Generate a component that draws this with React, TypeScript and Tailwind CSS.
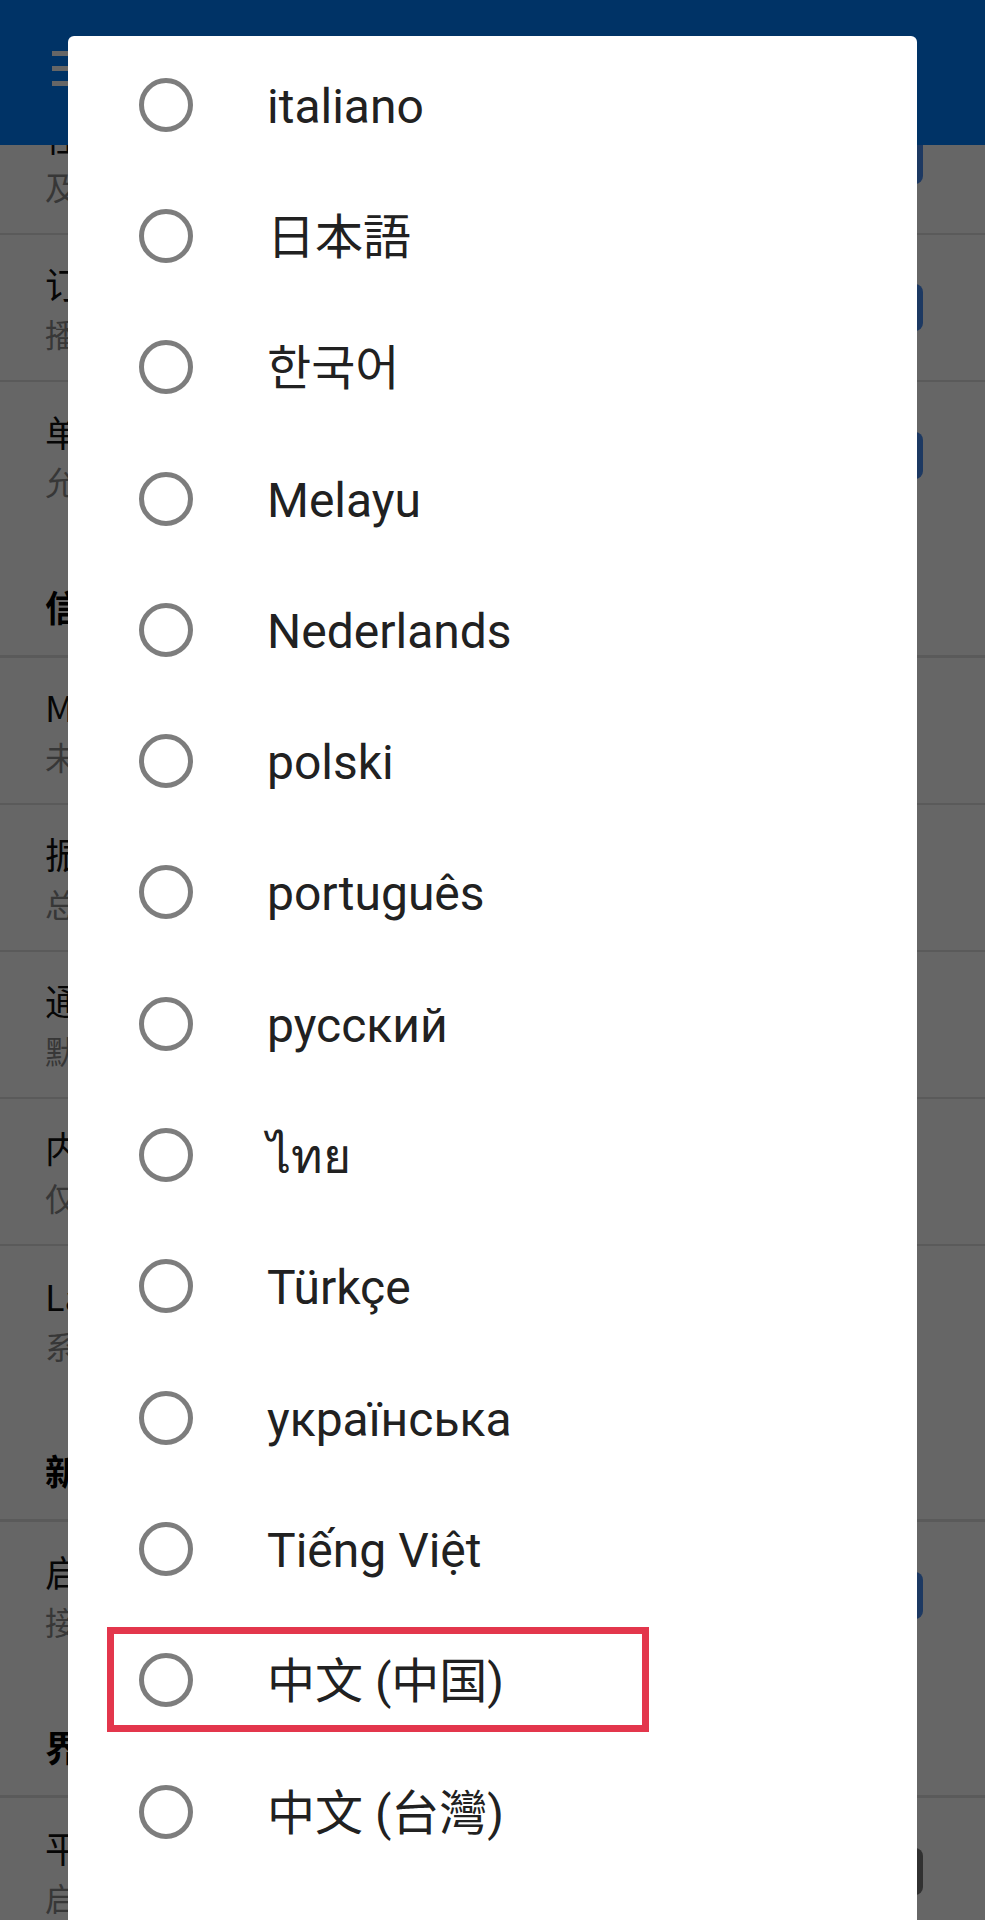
import React from 'react';

type Pref = { title: string; summary: string; toggle?: 'on' | 'off' };
type Block = { section?: string; items: Pref[] };

const blocks: Block[] = [
    {
        items: [
            { title: '任务完成后自动清理', summary: '及时删除已播放的内容', toggle: 'on' },
            { title: '订阅自动刷新', summary: '播放列表结束后自动刷新', toggle: 'on' },
            { title: '单曲循环', summary: '允许重复播放当前曲目', toggle: 'on' },
        ],
    },
    {
        section: '信息',
        items: [
            { title: 'Media 缓存', summary: '未设置' },
            { title: '振动反馈', summary: '总是' },
            { title: '通知样式', summary: '默认' },
            { title: '内容过滤', summary: '仅限 Wi-Fi' },
            { title: 'Language', summary: '系统默认' },
        ],
    },
    {
        section: '新闻',
        items: [{ title: '启用新闻推送', summary: '接收每日更新', toggle: 'on' }],
    },
    {
        section: '界面',
        items: [{ title: '平板模式', summary: '启用双栏布局', toggle: 'off' }],
    },
];

const languages = [
    { label: 'italiano' },
    { label: '日本語', font: "font-['Roboto','Noto_Sans_CJK_JP',sans-serif]" },
    { label: '한국어', font: "font-['Roboto','Noto_Sans_CJK_KR',sans-serif]" },
    { label: 'Melayu' },
    { label: 'Nederlands' },
    { label: 'polski' },
    { label: 'português' },
    { label: 'русский' },
    { label: 'ไทย' },
    { label: 'Türkçe' },
    { label: 'українська' },
    { label: 'Tiếng Việt' },
    { label: '中文 (中国)', font: "font-['Roboto','Noto_Sans_CJK_SC',sans-serif]", marked: true },
    { label: '中文 (台灣)', font: "font-['Roboto','Noto_Sans_CJK_TC',sans-serif]" },
];

function PrefRow({ pref, divider }: { pref: Pref; divider: boolean }) {
    return (
        <div className={`flex items-center justify-between h-[147px] pl-[45px] pr-[62px] ${divider ? 'border-b-2 border-[#e2e2e2]' : ''}`}>
            <div className="flex flex-col">
                <span className="text-[36px] leading-[50px] text-[#111] whitespace-nowrap">{pref.title}</span>
                <span className="text-[32px] leading-[50px] text-[#8a8a8a] whitespace-nowrap">{pref.summary}</span>
            </div>
            {pref.toggle && (
                <span className={`w-[120px] h-[47px] rounded-[8px] ${pref.toggle === 'on' ? 'bg-[#4a8ff5]' : 'bg-[#7a7a7a]'}`} />
            )}
        </div>
    );
}

export default function App() {
    return (
        <div className="relative w-[985px] h-[1920px] overflow-hidden bg-white font-['Noto_Sans_CJK_SC',sans-serif]">
            {/* Settings page */}
            <div className="flex flex-col h-full">
                <header className="relative z-10 flex items-start gap-[40px] h-[145px] min-h-[145px] bg-[#0080ff] pl-[52px] pt-[51px]">
                    <div className="flex flex-col gap-[10px] w-[54px]">
                        <span className="h-[5px] bg-white" />
                        <span className="h-[5px] bg-white" />
                        <span className="h-[5px] bg-white" />
                    </div>
                    <span className="text-[40px] leading-[36px] text-white">设置</span>
                </header>
                <div className="flex-1 overflow-hidden">
                    <div className="-mt-[57px]">
                        {blocks.map((block, bi) => (
                            <div key={bi}>
                                {block.section && (
                                    <div className="flex items-end h-[129px] pl-[45px] pb-[22px] border-b-[3px] border-[#e2e2e2]">
                                        <span className="text-[36px] font-bold text-[#000]">{block.section}</span>
                                    </div>
                                )}
                                {block.items.map((p, i) => (
                                    <PrefRow key={i} pref={p} divider={i < block.items.length - 1} />
                                ))}
                            </div>
                        ))}
                    </div>
                </div>
            </div>

            {/* Scrim */}
            <div className="absolute inset-0 z-20 bg-black/60" />

            {/* Language dialog */}
            <div className="absolute z-30 left-[68px] top-[36px] bottom-0 w-[849px] bg-white rounded-t-[6px] pt-[3px] font-['Roboto','Noto_Sans_CJK_SC',sans-serif]">
                {languages.map((lang) => (
                    <div key={lang.label} className="relative flex items-center h-[131.3px] pl-[71px]">
                        <span className="w-[54px] h-[54px] rounded-full border-[5px] border-[#7d7d7d]" />
                        <span className={`ml-[74px] text-[48px] leading-none text-[#212121] translate-y-[2px] ${lang.font ?? ''}`}>
                            {lang.label}
                        </span>
                        {lang.marked && (
                            <div className="absolute left-[39px] top-[12px] w-[542px] h-[105px] border-[7px] border-[#e3364c]" />
                        )}
                    </div>
                ))}
            </div>
        </div>
    );
}
